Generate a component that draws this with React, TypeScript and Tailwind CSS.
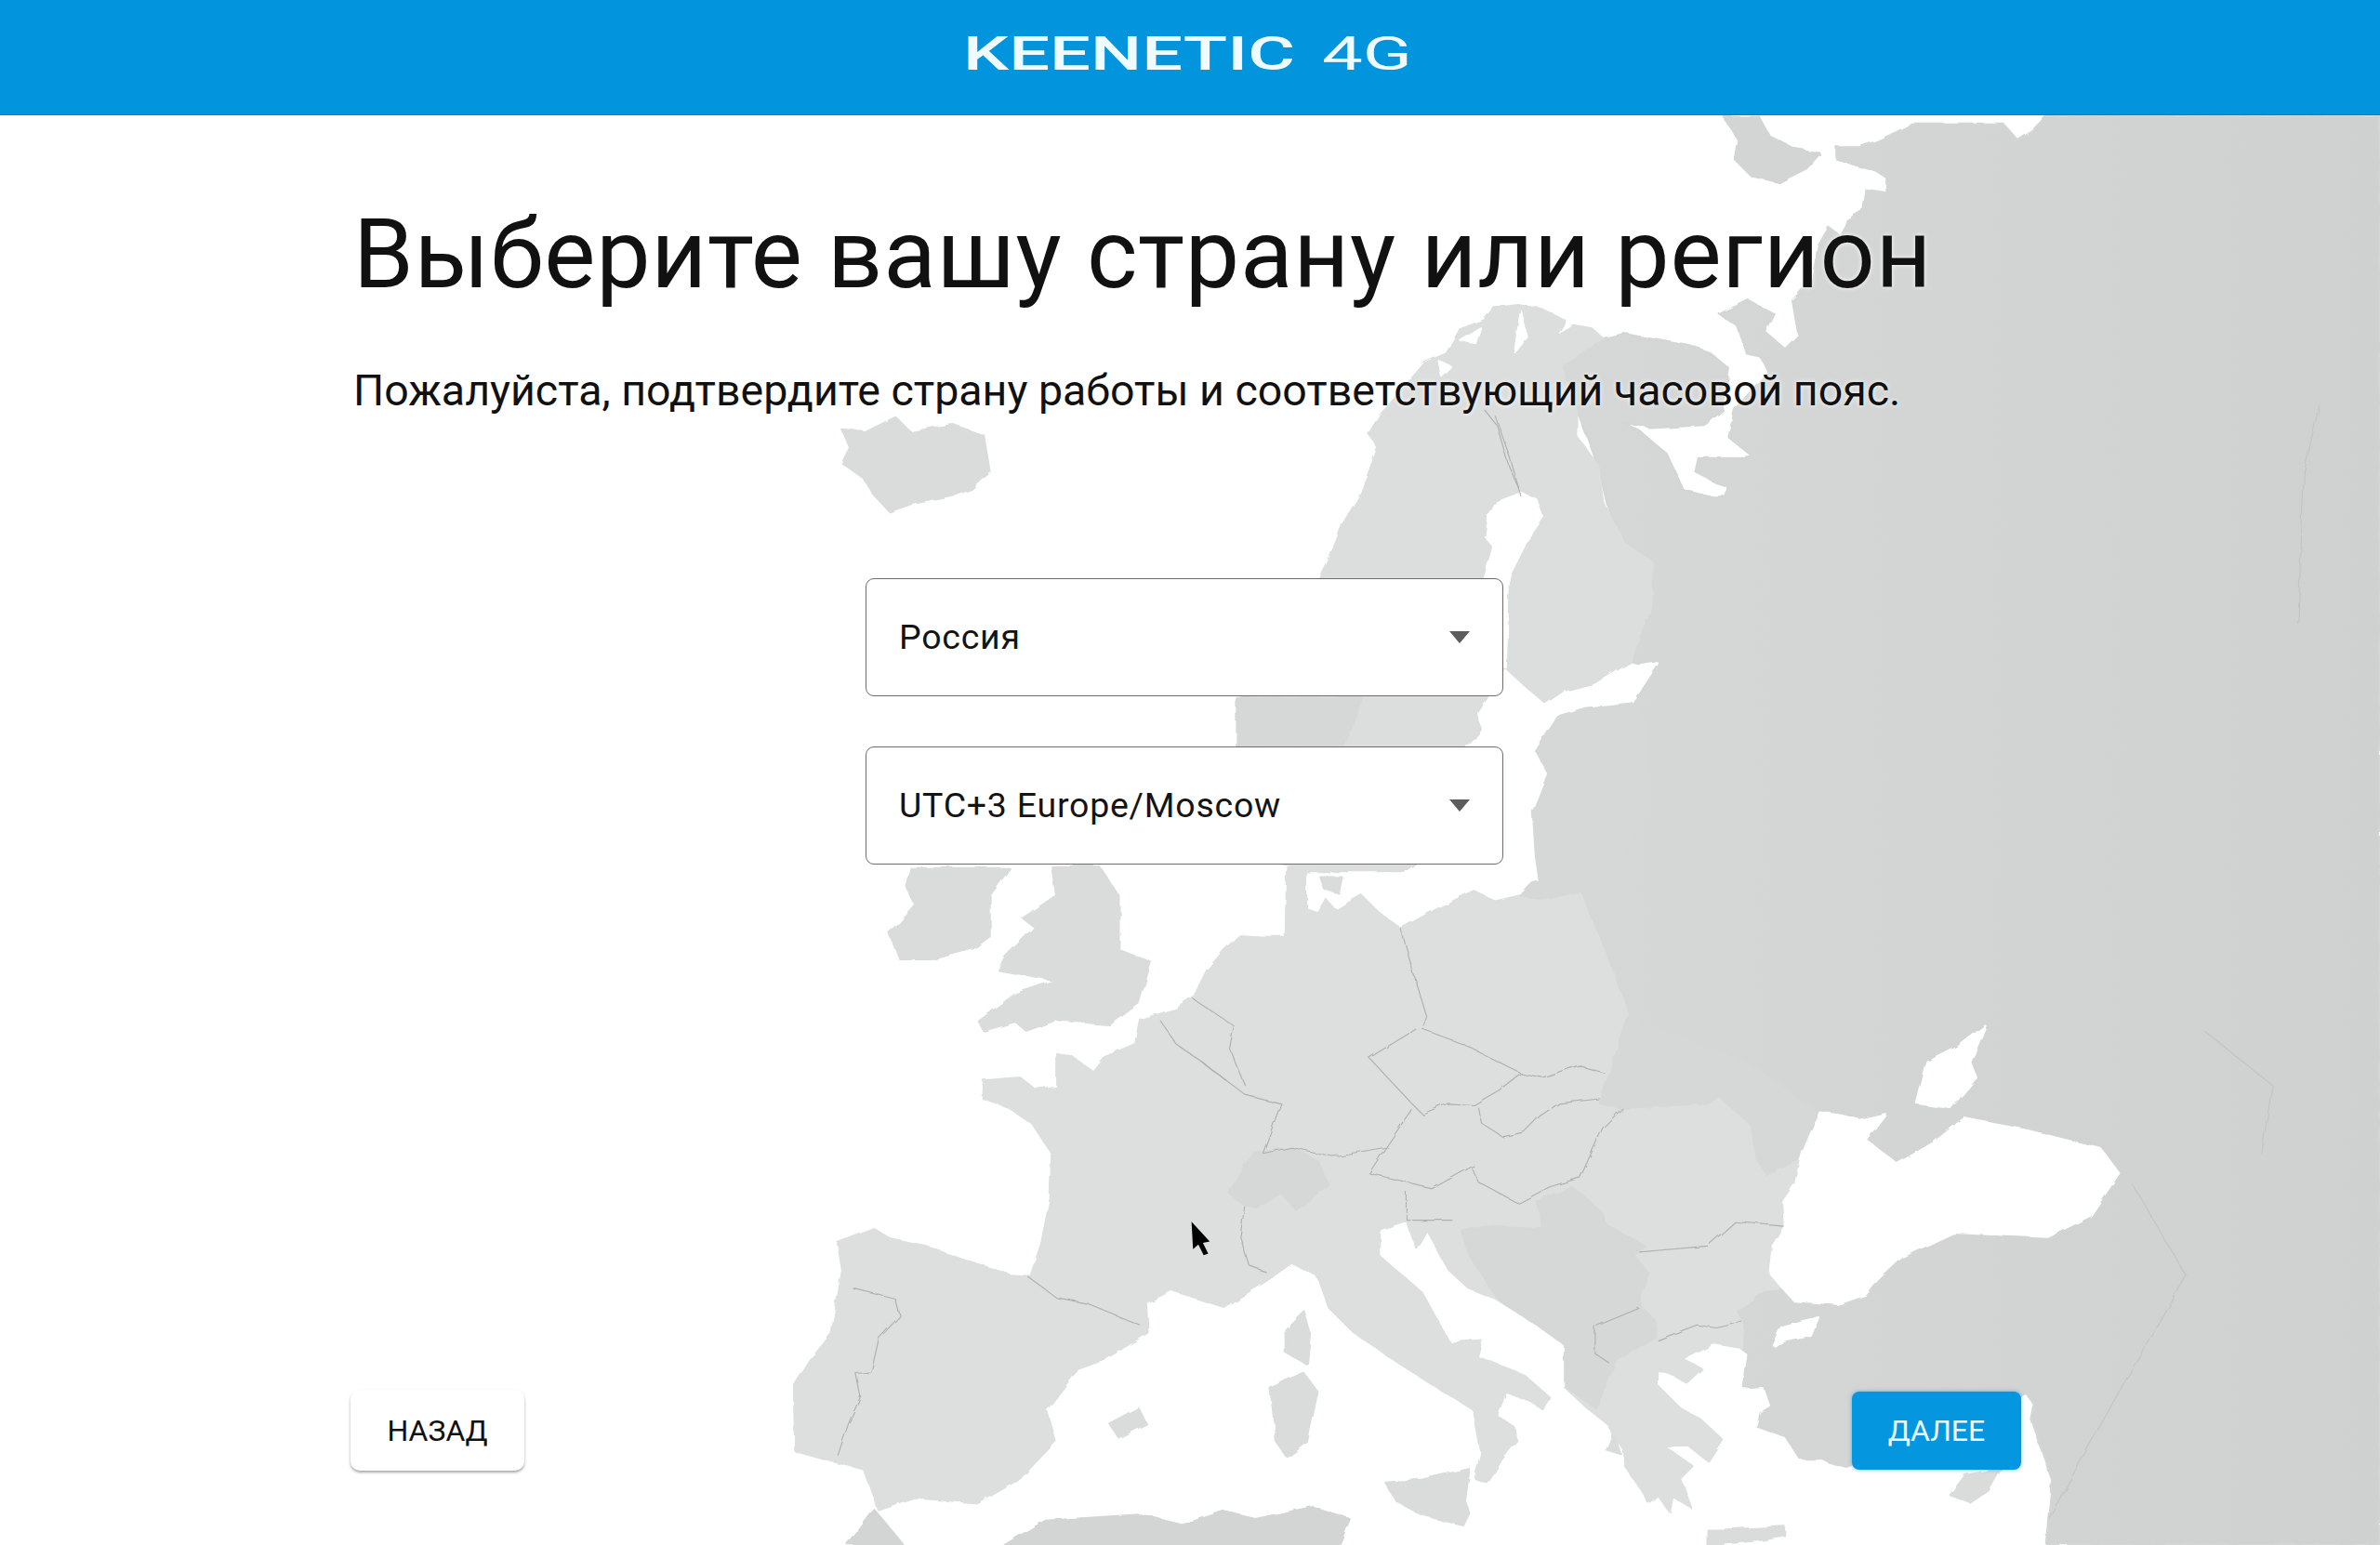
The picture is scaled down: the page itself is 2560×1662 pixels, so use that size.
// map shapes are in a 1568x1018 space, scaled up to the full page
const LIGHT = '#dddede';
const MID = '#d6d7d7';
const DARK = '#d3d4d4';
const BORDER = '#aeafaf';

const russia =
  '1349,76 1568,76 1568,1018 1348,1018 1352,975 1345,955 1338,935 1340,925 1335,918 1300,930 1250,955 1217,967 1206,964 1200,961 1186,961 1177,947 1158,940 1160,931 1167,927 1162,913 1149,914 1152,892 1147,888 1143,864 1120,820 1054,727 1073,670 1061,637 1040,587 1040,575 1050,520 1060,470 1078,462 1090,440 1074,436 1075,400 1053,307 1039,270 1028,240 1025,225 1056,223 1070,220 1113,228 1127,233 1139,243 1135,270 1123,280 1088,282 1068,278 1080,284 1098,299 1109,323 1129,328 1138,328 1139,321 1133,319 1117,311 1119,302 1150,302 1155,301 1139,288 1143,270 1150,262 1165,245 1160,235 1151,233 1145,215 1133,207 1152,198 1169,207 1163,219 1176,230 1185,221 1181,198 1194,184 1198,162 1205,150 1213,156 1217,145 1227,139 1229,125 1243,127 1243,117 1237,113 1210,105 1210,97 1225,97 1237,93 1260,82 1320,82 1329,92 1340,85';

const kanin = '1136,77 1159,77 1166,90 1182,98 1199,101 1190,111 1172,120 1154,116 1143,105 1145,92';

const europe =
  '524,956 523,914 535,895 548,879 555,837 552,819 576,810 586,816 610,821 638,831 665,840 679,841 686,820 692,790 693,760 680,740 665,730 648,724 648,712 672,710 682,718 696,716 696,694 707,697 720,706 727,697 748,688 751,672 775,665 786,658 795,640 806,627 816,617 834,618 847,618 848,571 875,571 875,590 880,600 897,590 909,602 923,612 945,600 971,587 985,594 1002,590 1040,587 1061,637 1073,670 1054,727 1067,730 1122,727 1133,723 1154,741 1157,763 1164,774 1188,762 1183,780 1175,792 1176,808 1168,821 1166,839 1175,849 1162,850 1143,864 1148,871 1147,888 1129,885 1114,893 1109,896 1121,902 1111,911 1103,906 1092,903 1092,913 1108,929 1120,935 1135,949 1126,963 1113,953 1096,953 1115,966 1107,974 1114,993 1102,986 1100,996 1092,985 1086,990 1083,984 1071,966 1070,955 1062,945 1060,939 1045,927 1031,914 1031,886 1013,873 988,857 968,849 955,837 940,810 933,822 927,804 909,810 909,828 937,852 955,885 976,883 973,894 1004,906 1021,921 1017,929 1010,924 992,917 986,933 998,941 999,949 989,962 980,977 972,974 976,957 971,929 955,919 923,899 892,878 875,861 868,841 851,832 834,844 806,861 772,850 755,858 756,878 727,896 710,902 689,929 695,950 672,974 645,990 603,987 579,995 569,968 545,962';

const nordic =
  '984,203 1000,201 1017,204 1031,211 1025,222 1037,215 1049,217 1056,223 1028,240 1039,270 1039,288 1053,307 1056,331 1070,358 1088,370 1088,400 1081,415 1074,436 1050,450 1030,455 1018,463 1005,452 992,440 980,459 973,470 975,480 965,492 960,530 945,560 925,574 880,574 840,568 815,520 815,492 817,461 870,381 875,371 885,345 896,327 908,295 902,286 909,274 939,239 953,233 962,217 978,211';

const seas = [
  // black sea
  '1199,733 1213,735 1225,738 1242,734 1229,751 1250,767 1274,753 1294,737 1336,745 1384,757 1396,773 1377,801 1349,815 1287,812 1253,828 1237,843 1229,853 1211,859 1182,857 1175,849 1166,839 1168,821 1176,808 1175,792 1183,780 1186,766 1188,759',
  // azov
  '1308,676 1298,700 1302,710 1285,730 1263,727 1270,700 1290,690',
  // marmara
  '1168,886 1174,874 1198,868 1193,880 1178,883',
  // bothnia
  '1002,325 986,331 981,341 979,354 984,360 978,382 975,440 992,440 994,380 1009,350 1016,340 1012,329',
  // gulf of finland
  '1092,437 1074,440 1050,452 1030,457 1018,465 1028,470 1045,465 1075,462 1080,455',
  // norway fjords
  '962,224 975,216 972,226',
  '1002,205 1006,222 998,232',
  '948,238 956,242 950,248',
  // danish straits
  '862,576 895,576 897,588 880,598 873,590 868,600 862,598',
];

const islands = [
  '555,283 570,285 590,275 600,285 615,282 628,280 648,287 652,311 640,322 627,327 600,332 586,337 575,325 569,315 555,305 560,295',
  '724,571 737,590 737,626 758,634 750,661 731,675 696,672 676,679 669,673 648,679 645,673 669,655 696,646 658,639 662,631 682,611 674,605 696,590 693,571',
  '600,572 665,572 652,590 652,617 641,625 614,632 593,632 586,615 603,596 597,584',
  '859,864 863,878 861,899 847,891 847,876',
  '858,904 868,917 861,950 848,960 841,950 837,914',
  '750,928 755,938 737,947 731,938',
  '913,977 937,975 955,971 968,968 965,990 968,997 964,1005 937,998 920,989',
  '1285,985 1295,972 1318,968 1310,982 1298,990',
  '1125,1008 1135,1008 1176,1006 1176,1012 1158,1015 1125,1018',
  '1058,955 1062,945 1068,958',
  '870,578 884,578 882,588 873,586',
];

const africa = [
  '559,1018 576,995 586,1007 595,1018',
  '662,1018 689,1002 751,998 779,1005 806,996 827,1001 865,993 889,1001 882,1018',
];

const mids = [
  '1028,470 1045,465 1078,462 1085,480 1088,530 1070,560 1060,575 1040,580 1015,585 1012,565 1010,535 1020,510 1012,495',
  '827,760 851,756 868,765 875,780 854,797 844,786 827,795 820,794 810,786 820,768',
  '963,811 974,808 1017,810 1012,792 1035,782 1043,788 1056,800 1058,807 1084,821 1076,827 1086,839 1080,853 1082,862 1090,870 1091,880 1064,897 1056,917 1051,927 1032,914 1031,886 1013,873 988,857 968,827',
  '815,460 898,460 890,480 885,492 815,492',
  '1002,590 1010,582 1040,575 1040,587 1020,592',
  '1054,727 1067,730 1122,727 1133,723 1154,741 1157,763 1164,774 1188,762 1198,733 1150,700 1073,670',
];

const borders = [
  '677,841 696,855 717,859 751,873',
  '562,849 590,856 593,867 579,882 574,904 564,905 567,920 559,938 552,959',
  '792,700 820,721 844,727 832,760',
  '786,658 813,676 810,691 820,715',
  '765,673 775,688 792,700 808,712',
  '923,612 930,637 940,670 937,678',
  '902,697 933,678',
  '902,697 930,727 937,734 954,727 971,728 988,718 1002,707 964,688 937,678',
  '930,731 913,756 878,762 851,756 832,760',
  '1002,707 1016,710 1040,702 1057,707',
  '974,729 976,740 990,749 1004,746 1015,735 1027,727 1054,724',
  '970,770 974,779 1000,793 1021,782 1041,776 1056,743 1069,730',
  '971,768 944,783 902,773 913,756',
  '820,795 817,815 823,834 834,838',
  '927,786 927,804 957,804',
  '1080,825 1125,821 1143,805 1175,808',
  '1092,883 1118,873 1131,875 1148,871',
  '1051,874 1080,862',
  '1051,874 1051,892 1060,898',
  '985,274 995,302 1002,327',
  '978,270 986,280 994,307 1002,325',
];

const faint = [
  '1528,267 1518,311 1514,411',
  '1452,679 1497,715 1490,760',
  '1405,780 1440,840 1400,910 1350,1000',
];

function EuropeMap() {
  return (
    <svg viewBox="0 0 1568 1018" className="absolute inset-0 h-full w-full" aria-hidden="true">
      <defs>
        <linearGradient id="east" x1="0" x2="1" y1="0" y2="0">
          <stop offset="0" stopColor="#d6d7d7" />
          <stop offset="1" stopColor="#cfd0d0" />
        </linearGradient>
        {/* roughens the straight polygon edges into a coastline */}
        <filter id="coast" x="0" y="0" width="100%" height="100%">
          <feTurbulence type="fractalNoise" baseFrequency="0.09" numOctaves="2" seed="4" />
          <feDisplacementMap in="SourceGraphic" scale="3.5" />
          <feGaussianBlur stdDeviation="0.25" />
        </filter>
      </defs>
      <g filter="url(#coast)">
        <g strokeLinejoin="round" strokeWidth="1.5">
          <polygon points={russia} fill="url(#east)" stroke="#d4d5d5" />
          <polygon points={kanin} fill={DARK} stroke={DARK} />
          <polygon points={europe} fill={LIGHT} stroke={LIGHT} />
          <polygon points={nordic} fill="#dcdddd" stroke="#dcdddd" />
          {mids.map((p, i) => (
            <polygon key={i} points={p} fill={MID} stroke={MID} />
          ))}
          {seas.map((p, i) => (
            <polygon key={i} points={p} fill="#fff" stroke="#fff" />
          ))}
          {islands.map((p, i) => (
            <polygon key={i} points={p} fill="#dadbdb" stroke="#dadbdb" />
          ))}
          {africa.map((p, i) => (
            <polygon key={i} points={p} fill={DARK} stroke={DARK} />
          ))}
        </g>
        <g fill="none" strokeWidth="0.7" strokeLinejoin="round">
          {borders.map((p, i) => (
            <polyline key={i} points={p} stroke={BORDER} />
          ))}
          {faint.map((p, i) => (
            <polyline key={i} points={p} stroke="#c3c4c4" />
          ))}
        </g>
      </g>
      {/* mouse pointer */}
      <path d="M785 805 L797 818 L792.5 819 L796 826 L793 827 L789.5 820 L786 823 Z" fill="#000" />
    </svg>
  );
}

function Logo() {
  return (
    <svg viewBox="0 0 479 40" className="mr-[4px] h-[40px] w-[479px] overflow-visible" fill="#f0fbff">
      <text x="-3" y="36" fontFamily="Roboto, sans-serif" fontWeight="500" fontSize="50" textLength="357" lengthAdjust="spacingAndGlyphs">
        KEENETIC
      </text>
      <text x="383" y="36" fontFamily="Roboto, sans-serif" fontWeight="400" fontSize="50" textLength="97" lengthAdjust="spacingAndGlyphs">
        4G
      </text>
    </svg>
  );
}

function SelectField({ value }: { value: string }) {
  return (
    <div className="flex h-[127px] w-[686px] items-center justify-between rounded-[9px] border-[1.5px] border-[#6f6b69] bg-white pl-[35px] pr-[35px]">
      <span className="text-[37.5px] tracking-[0.02em] text-[#141414]">{value}</span>
      <svg viewBox="0 0 22 13" className="h-[13px] w-[22px]">
        <path d="M0 0 H22 L11 13 Z" fill="#5c5c5c" />
      </svg>
    </div>
  );
}

export default function App() {
  return (
    <div className="relative h-[1662px] w-full overflow-hidden bg-white font-['Roboto',sans-serif]">
      <EuropeMap />

      <header className="relative flex h-[124px] items-start justify-center border-b border-[#0582c4] bg-[#0295dd] pt-[39px]">
        <Logo />
      </header>

      <main className="relative ml-[377px] w-[1797px]">
        <h1 className="pl-[3px] pt-[89px] text-[104px] leading-[122px] tracking-[0.007em] text-[#111111] [text-shadow:0_0_5px_#fff]">
          Выберите вашу страну или регион
        </h1>
        <p className="pl-[3px] pt-[59px] text-[46.5px] leading-[52px] text-[#111111] [text-shadow:0_0_5px_#fff]">
          Пожалуйста, подтвердите страну работы и соответствующий часовой пояс.
        </p>

        <div className="mr-[3px] mt-[176px] flex flex-col items-center gap-[54px]">
          <SelectField value="Россия" />
          <SelectField value="UTC+3 Europe/Moscow" />
        </div>

        <div className="mt-[565px] flex items-center justify-between">
          <button className="h-[87px] w-[187px] rounded-[10px] bg-white text-[32px] text-[#111111] shadow-[0_2px_3px_rgba(0,0,0,0.35)]">
            НАЗАД
          </button>
          <button className="h-[84px] w-[182px] rounded-[8px] bg-[#0496df] text-[32px] text-[#eafaff] shadow-[0_0_4px_rgba(4,150,223,0.6)]">
            ДАЛЕЕ
          </button>
        </div>
      </main>
    </div>
  );
}
